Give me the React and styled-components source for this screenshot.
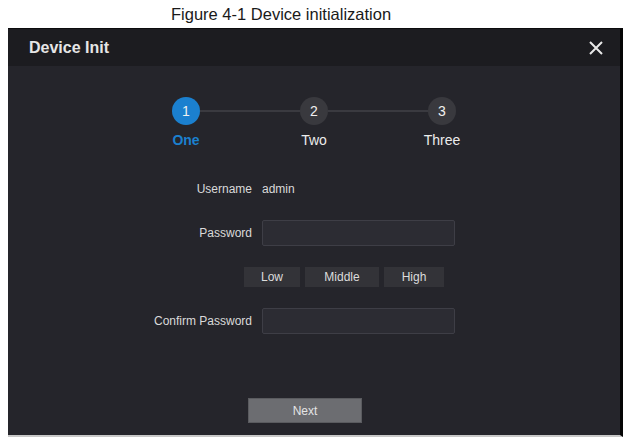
import React from "react";
import styled, { createGlobalStyle } from "styled-components";

const GlobalStyle = createGlobalStyle`
  body {
    margin: 0;
    background: #ffffff;
    font-family: "Liberation Sans", Arial, sans-serif;
  }
`;

const Page = styled.div`
  width: 630px;
  height: 440px;
  background: #ffffff;
  overflow: hidden;
`;

const Caption = styled.div`
  height: 28px;
  line-height: 28px;
  padding-left: 171px;
  font-size: 16.5px;
  color: #1a1a1a;
`;

const Dialog = styled.div`
  margin-left: 8px;
  width: 612px;
  height: 406px;
  background: #25252b;
  border-top: 1px solid #0c0c0e;
  border-right: 3px solid #050505;
  border-bottom: 2px solid #c8c8c8;
  display: flex;
  flex-direction: column;
`;

const Header = styled.div`
  height: 37px;
  background: #1c1c20;
  display: flex;
  align-items: center;
  justify-content: space-between;
  padding: 0 17px 0 21px;
`;

const Title = styled.div`
  color: #e6e6e6;
  font-size: 16px;
  font-weight: bold;
`;

const Close = styled.div`
  width: 14px;
  height: 14px;
  display: flex;
`;

const StepTrack = styled.div`
  margin-top: 31px;
  display: flex;
  align-items: center;
  justify-content: center;
`;

const Circle = styled.div`
  width: 28px;
  height: 28px;
  border-radius: 50%;
  background: ${(p) => (p.$active ? "#1b80cf" : "#39393e")};
  color: #f0f0f0;
  font-size: 14px;
  display: flex;
  align-items: center;
  justify-content: center;
`;

const Connector = styled.div`
  width: 100px;
  height: 2px;
  background: #3a3a40;
`;

const StepLabels = styled.div`
  margin-top: 6px;
  display: flex;
  justify-content: center;
`;

const StepLabel = styled.div`
  width: 128px;
  text-align: center;
  font-size: 14px;
  line-height: 18px;
  color: ${(p) => (p.$active ? "#1b80cf" : "#ececec")};
  font-weight: ${(p) => (p.$active ? "bold" : "normal")};
`;

const Row = styled.div`
  display: flex;
  align-items: center;
  height: ${(p) => p.$h || 26}px;
  margin-top: ${(p) => p.$top}px;
`;

const Label = styled.div`
  width: 244px;
  text-align: right;
  font-size: 12px;
  color: #dadada;
`;

const Value = styled.div`
  margin-left: 10px;
  font-size: 12px;
  color: #dadada;
`;

const Input = styled.input`
  margin-left: 10px;
  width: 193px;
  height: 26px;
  box-sizing: border-box;
  background: #2c2c33;
  border: 1px solid #3e3e46;
  border-radius: 2px;
  outline: none;
  color: #ddd;
`;

const Strength = styled.div`
  display: flex;
  gap: 5px;
  padding-left: 236px;
`;

const Level = styled.div`
  width: ${(p) => p.$w}px;
  height: 20px;
  background: #333338;
  color: #dcdcdc;
  font-size: 12px;
  display: flex;
  align-items: center;
  justify-content: center;
`;

const NextButton = styled.button`
  margin: 64px 0 0 240px;
  width: 114px;
  height: 25px;
  background: #6c6d71;
  border: 1px solid #5a5b5f;
  color: #e4e4e4;
  font-family: "Liberation Sans", Arial, sans-serif;
  font-size: 12px;
  padding: 0;
`;

const steps = ["One", "Two", "Three"];

export default function App() {
  return (
    <Page>
      <GlobalStyle />
      <Caption>Figure 4-1 Device initialization</Caption>
      <Dialog>
        <Header>
          <Title>Device Init</Title>
          <Close>
            <svg width="14" height="14" viewBox="0 0 14 14">
              <path d="M1 1L13 13M13 1L1 13" stroke="#e8e8e8" strokeWidth="2" />
            </svg>
          </Close>
        </Header>
        <StepTrack>
          <Circle $active>1</Circle>
          <Connector />
          <Circle>2</Circle>
          <Connector />
          <Circle>3</Circle>
        </StepTrack>
        <StepLabels>
          {steps.map((s, i) => (
            <StepLabel key={s} $active={i === 0}>
              {s}
            </StepLabel>
          ))}
        </StepLabels>
        <Row $top={30} $h={20}>
          <Label>Username</Label>
          <Value>admin</Value>
        </Row>
        <Row $top={21}>
          <Label>Password</Label>
          <Input type="password" />
        </Row>
        <Row $top={21} $h={20}>
          <Strength>
            <Level $w={56}>Low</Level>
            <Level $w={74}>Middle</Level>
            <Level $w={60}>High</Level>
          </Strength>
        </Row>
        <Row $top={21}>
          <Label>Confirm Password</Label>
          <Input type="password" />
        </Row>
        <NextButton>Next</NextButton>
      </Dialog>
    </Page>
  );
}
